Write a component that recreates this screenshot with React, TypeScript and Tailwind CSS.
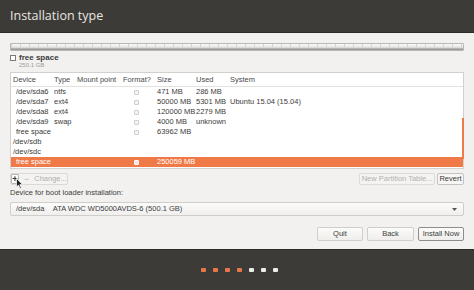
import React from "react";

const rows = [
  { dev: "/dev/sda6", type: "ntfs", size: "471 MB", used: "286 MB", sys: "", indent: true, box: true },
  { dev: "/dev/sda7", type: "ext4", size: "50000 MB", used: "5301 MB", sys: "Ubuntu 15.04 (15.04)", indent: true, box: true },
  { dev: "/dev/sda8", type: "ext4", size: "120000 MB", used: "2279 MB", sys: "", indent: true, box: true },
  { dev: "/dev/sda9", type: "swap", size: "4000 MB", used: "unknown", sys: "", indent: true, box: true },
  { dev: "free space", type: "", size: "63962 MB", used: "", sys: "", indent: true, box: true },
  { dev: "/dev/sdb", type: "", size: "", used: "", sys: "", indent: false, box: false },
  { dev: "/dev/sdc", type: "", size: "", used: "", sys: "", indent: false, box: false },
];

function Cols({ a, b, c, d, e, f, g, cls = "", indent = false }: { a: React.ReactNode; b?: React.ReactNode; c?: React.ReactNode; d?: React.ReactNode; e?: React.ReactNode; f?: React.ReactNode; g?: React.ReactNode; cls?: string; indent?: boolean }) {
  return (
    <div className={"flex items-center " + cls}>
      <div className={"w-[43px] shrink-0 " + (indent ? "pl-[5px]" : "pl-[2px]")}>{a}</div>
      <div className="w-[23px] shrink-0">{b}</div>
      <div className="w-[46px] shrink-0">{c}</div>
      <div className="w-[34px] shrink-0">{d}</div>
      <div className="w-[39px] shrink-0">{e}</div>
      <div className="w-[34px] shrink-0">{f}</div>
      <div className="flex-1">{g}</div>
    </div>
  );
}

const Box = ({ white = false }: { white?: boolean }) => (
  <div className={"ml-[11px] h-[5px] w-[5px] rounded-[1px] border " + (white ? "border-white bg-white/80" : "border-[#d0cfcc] bg-[#f4f4f3]")} />
);

export default function App() {
  return (
    <div
      className="flex h-[290px] w-[474px] flex-col bg-[#f2f1f0] text-[7.5px] text-[#3c3c3c]"
      style={{ fontFamily: '"Liberation Sans", "Noto Sans", sans-serif' }}
    >
      <div className="flex h-[33px] shrink-0 items-center border-b border-[#2c2b28] bg-[#3c3b37] pl-[10px] text-[12.5px] text-[#e8e6e1]" style={{ fontFamily: '"Open Sans", "Liberation Sans", sans-serif' }}>
        Installation type
      </div>

      <div className="flex flex-1 flex-col px-[10px] pt-[10px]">
        {/* partition bar */}
        <div className="h-[8px] w-[454px] rounded-[1px] border border-[#b8b8b6] bg-[linear-gradient(to_bottom,#fafafa_0%,#e4e4e2_55%,#a9a9a7_80%,#8f8f8d_100%)]">
          <div className="h-[3px] bg-[repeating-linear-gradient(to_right,#d4d4d2_0px,#d4d4d2_1px,transparent_1px,transparent_9px)]" />
        </div>

        <div className="mt-[3px] flex h-[8px] items-center gap-[3px]">
          <div className="h-[6px] w-[6px] border border-[#7a7a78] bg-white" />
          <span className="text-[8px] leading-[8px] font-bold text-[#3a3a3a]">free space</span>
        </div>
        <div className="h-[7px] pl-[9px] text-[6px] leading-[7px] text-[#9a9a98]">250.1 GB</div>

        {/* table */}
        <div className="relative mt-[3px] h-[97px] w-[454px] border border-[#d2d1ce] bg-white">
          <Cols
            cls="h-[14px] border-b border-[#e2e1de] text-[#4a4a4a]"
            a="Device"
            b="Type"
            c="Mount point"
            d="Format?"
            e="Size"
            f="Used"
            g="System"
          />
          {rows.map((r) => (
            <Cols
              key={r.dev}
              cls="h-[10px]"
              indent={r.indent}
              a={r.dev}
              b={r.type}
              d={r.box ? <Box /> : null}
              e={r.size}
              f={r.used}
              g={r.sys}
            />
          ))}
          <Cols cls="h-[10px] bg-[#ef7a47] text-white" indent a="free space" d={<Box white />} e="250059 MB" />
          <div className="absolute right-[-1px] top-[45px] h-[41px] w-[2px] bg-[#ef7a47]" />
        </div>

        {/* buttons row */}
        <div className="mt-[4px] flex h-[12px] items-center justify-between">
          <div className="relative flex h-[12px] w-[58px] items-center rounded-[2px] border border-[#dad9d6] bg-[#f4f3f2]">
            <div className="flex h-[10px] w-[8px] items-center justify-center rounded-[1px] border border-[#b9b8b5] bg-white text-[9px] font-bold leading-none text-[#333]">+</div>
            <span className="ml-[5px] text-[9px] leading-none text-[#b5b4b1]">−</span>
            <span className="ml-[5px] text-[#b0afac]">Change...</span>
            <svg className="absolute left-[5px] top-[4px]" width="8" height="12" viewBox="0 0 8 12">
              <path d="M0.5 0.5 L0.5 9 L2.5 7 L4 10.5 L5.3 10 L3.8 6.6 L6.5 6.6 Z" fill="#222" stroke="#fff" strokeWidth="0.7" />
            </svg>
          </div>
          <div className="flex gap-[2px]">
            <div className="flex h-[12px] w-[76px] items-center justify-center rounded-[2px] border border-[#dcdbd8] bg-[#f4f3f2] text-[#b3b2af]">New Partition Table...</div>
            <div className="flex h-[12px] w-[27px] items-center justify-center rounded-[2px] border border-[#c4c3c0] bg-[#f7f6f5] text-[#3a3a3a]">Revert</div>
          </div>
        </div>

        <div className="mt-[3px] h-[10px] leading-[10px] text-[#3c3c3c]">Device for boot loader installation:</div>

        <div className="mt-[4px] flex h-[14px] w-[454px] items-center justify-between rounded-[2px] border border-[#cfcecb] bg-[linear-gradient(to_bottom,#fbfbfa,#f0efee)] pl-[5px] pr-[6px]">
          <span>/dev/sda&nbsp;&nbsp;&nbsp;&nbsp;ATA WDC WD5000AVDS-6 (500.1 GB)</span>
          <svg width="5" height="3" viewBox="0 0 5 3">
            <path d="M0 0 L5 0 L2.5 3 Z" fill="#555" />
          </svg>
        </div>

        <div className="mt-[11px] flex justify-end gap-[4px]">
          <div className="flex h-[14px] w-[46px] items-center justify-center rounded-[2px] border border-[#cfcecb] bg-[linear-gradient(to_bottom,#fbfbfa,#efeeed)]">Quit</div>
          <div className="flex h-[14px] w-[47px] items-center justify-center rounded-[2px] border border-[#cfcecb] bg-[linear-gradient(to_bottom,#fbfbfa,#efeeed)]">Back</div>
          <div className="flex h-[14px] w-[46px] items-center justify-center rounded-[2px] border border-[#8e8d8a] bg-[linear-gradient(to_bottom,#fbfbfa,#efeeed)]">Install Now</div>
        </div>
      </div>

      <div className="flex h-[41px] shrink-0 items-center justify-center gap-[7px] border-t border-[#2c2b28] bg-[#3c3b37] pb-[1px] pl-[5px]">
        {[0, 1, 2, 3].map((i) => (
          <div key={i} className="h-[4px] w-[5px] rounded-[1px] bg-[#e5774a]" />
        ))}
        {[0, 1, 2].map((i) => (
          <div key={i} className="h-[4px] w-[5px] rounded-[1px] bg-[#ececeb]" />
        ))}
      </div>
    </div>
  );
}
